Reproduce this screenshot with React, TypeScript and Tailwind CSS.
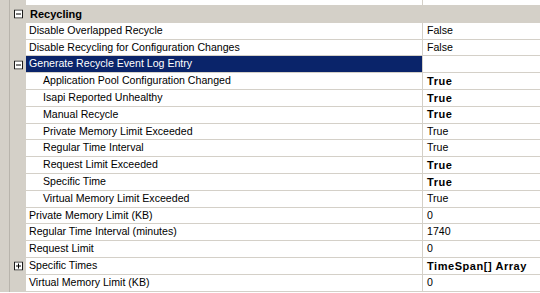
import React from "react";

type Row =
  | { kind: "cat"; name: string; expand?: "minus" | "plus" }
  | {
      kind: "prop";
      name: string;
      value?: string;
      bold?: boolean;
      indent?: boolean;
      selected?: boolean;
      expand?: "minus" | "plus";
    };

const rows: Row[] = [
  { kind: "prop", name: "Shutdown Executable Parameters", value: "" },
  { kind: "cat", name: "Recycling", expand: "minus" },
  { kind: "prop", name: "Disable Overlapped Recycle", value: "False" },
  { kind: "prop", name: "Disable Recycling for Configuration Changes", value: "False" },
  { kind: "prop", name: "Generate Recycle Event Log Entry", value: "", selected: true, expand: "minus" },
  { kind: "prop", name: "Application Pool Configuration Changed", value: "True", bold: true, indent: true },
  { kind: "prop", name: "Isapi Reported Unhealthy", value: "True", bold: true, indent: true },
  { kind: "prop", name: "Manual Recycle", value: "True", bold: true, indent: true },
  { kind: "prop", name: "Private Memory Limit Exceeded", value: "True", indent: true },
  { kind: "prop", name: "Regular Time Interval", value: "True", indent: true },
  { kind: "prop", name: "Request Limit Exceeded", value: "True", bold: true, indent: true },
  { kind: "prop", name: "Specific Time", value: "True", bold: true, indent: true },
  { kind: "prop", name: "Virtual Memory Limit Exceeded", value: "True", indent: true },
  { kind: "prop", name: "Private Memory Limit (KB)", value: "0" },
  { kind: "prop", name: "Regular Time Interval (minutes)", value: "1740" },
  { kind: "prop", name: "Request Limit", value: "0" },
  { kind: "prop", name: "Specific Times", value: "TimeSpan[] Array", bold: true, expand: "plus" },
  { kind: "prop", name: "Virtual Memory Limit (KB)", value: "0" },
];

function ExpandBox({ type }: { type: "minus" | "plus" }) {
  return (
    <svg width="9" height="9" viewBox="0 0 9 9" className="block">
      <rect x="0.5" y="0.5" width="8" height="8" fill="#ffffff" stroke="#1a1a1a" />
      <line x1="2" y1="4.5" x2="7" y2="4.5" stroke="#000" />
      {type === "plus" && <line x1="4.5" y1="2" x2="4.5" y2="7" stroke="#000" />}
    </svg>
  );
}

function Margin({ expand }: { expand?: "minus" | "plus" }) {
  return (
    <div className="relative h-full w-[26px] shrink-0 bg-[#d4d0c8]">
      <div className="absolute left-[9px] top-0 h-full w-px bg-[#b8b4ac]" />
      {expand && (
        <div className="absolute left-[14px] top-1/2 -translate-y-1/2">
          <ExpandBox type={expand} />
        </div>
      )}
    </div>
  );
}

export default function App() {
  return (
    <div
      className="h-[293px] w-[540px] overflow-hidden bg-white text-[10.6px] text-black"
      style={{ fontFamily: '"Liberation Sans", Arial, sans-serif' }}
    >
      <div className="-mt-[10.8px] flex flex-col">
        {rows.map((r, i) => {
          if (r.kind === "cat") {
            return (
              <div key={i} className="flex h-[16.8px] items-stretch bg-[#d4d0c8]">
                <Margin expand={r.expand} />
                <div className="flex flex-1 items-center pl-[4px] text-[11px] font-bold">{r.name}</div>
              </div>
            );
          }
          return (
            <div key={i} className="flex h-[16.8px] items-stretch">
              <Margin expand={r.expand} />
              <div
                className={
                  "flex w-[397px] shrink-0 items-center border-b border-r border-[#d4d0c8] " +
                  (r.indent ? "pl-[17px] " : "pl-[3px] ") +
                  (r.selected ? "bg-[#0a246a] text-white" : "bg-white")
                }
              >
                <span className="whitespace-nowrap">{r.name}</span>
              </div>
              <div className="flex flex-1 items-center border-b border-[#d4d0c8] pl-[4px]">
                <span
                  className={
                    "whitespace-nowrap " + (r.bold ? "text-[11px] font-bold tracking-[0.55px]" : "")
                  }
                >
                  {r.value}
                </span>
              </div>
            </div>
          );
        })}
      </div>
    </div>
  );
}
